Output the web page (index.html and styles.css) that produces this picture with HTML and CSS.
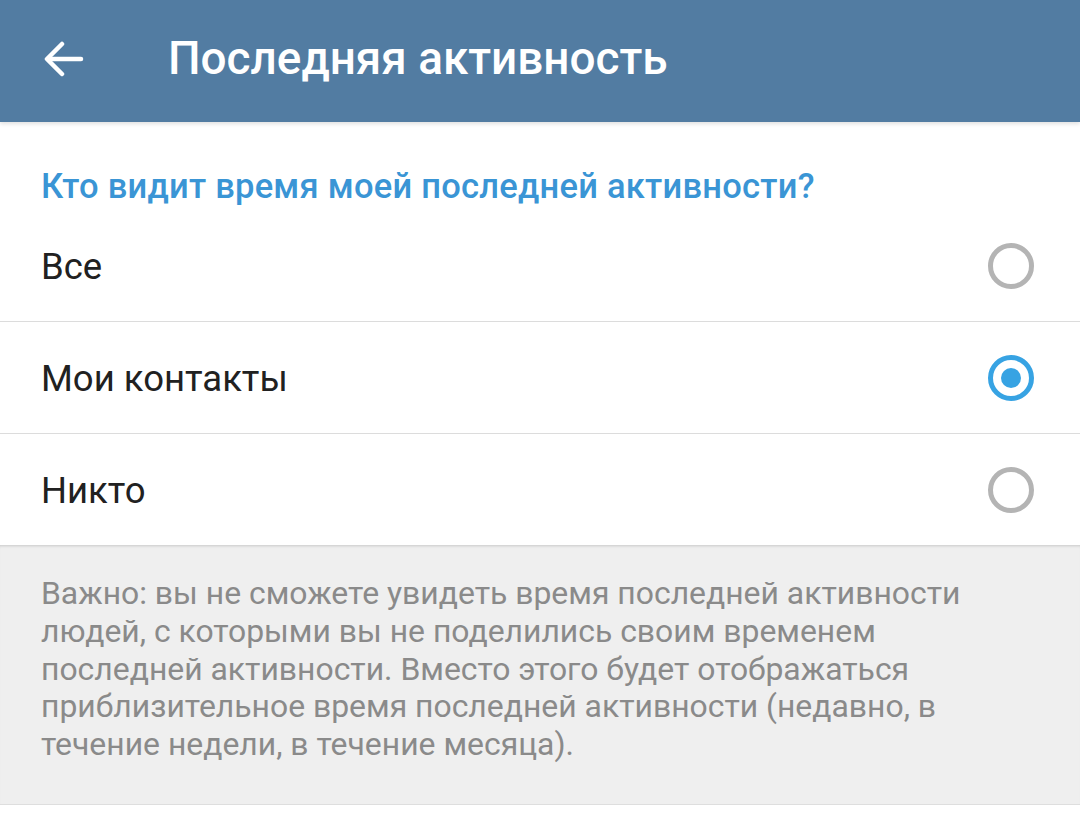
FILE: index.html
```html
<!DOCTYPE html>
<html lang="ru">
<head>
<meta charset="utf-8">
<title>Последняя активность</title>
<link rel="stylesheet" href="styles.css">
</head>
<body>
<header class="appbar">
  <button class="back" aria-label="Назад">
    <svg width="40" height="36" viewBox="0 0 40 36" fill="none" stroke="#fff" stroke-width="4.5" stroke-linecap="round" stroke-linejoin="round">
      <path d="M37 18H4"/>
      <path d="M18 3L3 18l15 15"/>
    </svg>
  </button>
  <h1 class="title">Последняя активность</h1>
</header>
<main>
  <section class="options">
    <h2 class="section-title">Кто видит время моей последней активности?</h2>
    <div class="row">
      <span class="label">Все</span>
      <span class="radio"></span>
    </div>
    <div class="row">
      <span class="label">Мои контакты</span>
      <span class="radio checked"></span>
    </div>
    <div class="row last">
      <span class="label">Никто</span>
      <span class="radio"></span>
    </div>
  </section>
  <section class="info">
    <p>Важно: вы не сможете увидеть время последней активности людей, с которыми вы не поделились своим временем последней активности. Вместо этого будет отображаться приблизительное время последней активности (недавно, в течение недели, в течение месяца).</p>
  </section>
</main>
</body>
</html>
```
FILE: styles.css
```css
* { box-sizing: border-box; }
html, body {
  margin: 0;
  padding: 0;
  background: #ffffff;
  font-family: Roboto, "Noto Sans", "Liberation Sans", sans-serif;
}
.appbar {
  position: relative;
  height: 122px;
  background: #527ca2;
  display: flex;
  align-items: center;
  padding-left: 44px;
  box-shadow: 0 2px 4px rgba(0, 0, 0, 0.12);
  z-index: 2;
}
.back {
  background: none;
  border: 0;
  padding: 0;
  width: 40px;
  height: 36px;
  display: flex;
  margin-top: -4px;
}
.title {
  margin: -4px 0 0 84px;
  color: #ffffff;
  font-weight: 500;
  font-size: 45.9px;
  line-height: 1;
}
.options {
  background: #ffffff;
}
.section-title {
  margin: 0;
  height: 88px;
  padding: 46px 0 0 41px;
  font-size: 34.5px;
  letter-spacing: 0.25px;
  font-weight: 500;
  color: #3a95d5;
  line-height: 36px;
}
.row {
  height: 112px;
  display: flex;
  align-items: center;
  justify-content: space-between;
  padding: 0 46px 0 41px;
  border-bottom: 1px solid #dcdcdc;
}
.row.last {
  height: 111px;
  border-bottom: 0;
}
.label {
  font-size: 36.5px;
  color: #212121;
  margin-top: 2px;
}
.radio {
  width: 46px;
  height: 46px;
  border-radius: 50%;
  border: 5px solid #b4b4b4;
  display: flex;
  align-items: center;
  justify-content: center;
}
.radio.checked {
  border-color: #37a3e3;
}
.radio.checked::after {
  content: "";
  width: 20px;
  height: 20px;
  border-radius: 50%;
  background: #37a3e3;
}
.info {
  background: #efefef;
  padding: 30px 40px 40px 41px;
  box-shadow: inset 0 3px 3px -2px rgba(0, 0, 0, 0.16);
  border-bottom: 1px solid #dedede;
}
.info p {
  margin: 0;
  font-size: 31.9px;
  line-height: 37.8px;
  color: #8a8a8a;
}
```
